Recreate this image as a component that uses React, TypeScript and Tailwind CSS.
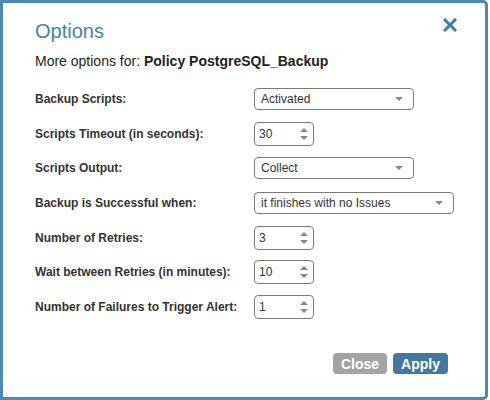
import React from 'react';

type Row =
  | { label: string; kind: 'select'; value: string; width: string }
  | { label: string; kind: 'number'; value: string };

const rows: Row[] = [
  { label: 'Backup Scripts:', kind: 'select', value: 'Activated', width: 'w-[160px]' },
  { label: 'Scripts Timeout (in seconds):', kind: 'number', value: '30' },
  { label: 'Scripts Output:', kind: 'select', value: 'Collect', width: 'w-[160px]' },
  { label: 'Backup is Successful when:', kind: 'select', value: 'it finishes with no Issues', width: 'w-[200px]' },
  { label: 'Number of Retries:', kind: 'number', value: '3' },
  { label: 'Wait between Retries (in minutes):', kind: 'number', value: '10' },
  { label: 'Number of Failures to Trigger Alert:', kind: 'number', value: '1' },
];

function SelectBox({ value, width }: { value: string; width: string }) {
  return (
    <div className={`${width} h-[22px] flex items-center justify-between border border-[#7a7a7a] rounded-[4px] bg-white pl-[6px] pr-[10px] text-[12px] text-[#333]`}>
      <span>{value}</span>
      <span className="w-0 h-0 border-l-[4px] border-r-[4px] border-t-[4px] border-l-transparent border-r-transparent border-t-[#888]" />
    </div>
  );
}

function NumberBox({ value }: { value: string }) {
  return (
    <div className="w-[60px] h-[24px] flex items-center justify-between border border-[#7a7a7a] rounded-[4px] bg-white pl-[4px] pr-[5px] text-[12px] text-[#333]">
      <span>{value}</span>
      <div className="flex flex-col gap-[4px]">
        <span className="w-0 h-0 border-l-[4px] border-r-[4px] border-b-[4px] border-l-transparent border-r-transparent border-b-[#888]" />
        <span className="w-0 h-0 border-l-[4px] border-r-[4px] border-t-[4px] border-l-transparent border-r-transparent border-t-[#888]" />
      </div>
    </div>
  );
}

export default function App() {
  return (
    <div className="w-[490px] h-[400px] bg-white" style={{ fontFamily: '"Liberation Sans", Arial, sans-serif' }}>
      <div className="w-[488px] h-[400px] border-[3px] border-[#4a8ab5] rounded-r-[5px] bg-white pl-[32px] pr-[28px] pt-[16px] flex flex-col">
        {/* header */}
        <div className="flex items-start justify-between h-[24px]">
          <h1 className="mt-[2px] text-[20px] text-[#3d84b3] leading-none">Options</h1>
          <svg width="14" height="14" viewBox="0 0 14 14" className="-mt-[1px]">
            <path d="M2 2 L12 12 M12 2 L2 12" stroke="#3f7ea8" strokeWidth="3" strokeLinecap="square" />
          </svg>
        </div>
        <p className="mt-[11px] text-[14px] text-[#222] leading-none">
          More options for: <span className="font-bold">Policy PostgreSQL_Backup</span>
        </p>

        {/* settings */}
        <div className="mt-[14px] flex flex-col">
          {rows.map((row) => (
            <div key={row.label} className="h-[34.6px] flex items-center">
              <span className="w-[219px] text-[12px] font-bold text-[#333]">{row.label}</span>
              {row.kind === 'select' ? (
                <SelectBox value={row.value} width={row.width} />
              ) : (
                <NumberBox value={row.value} />
              )}
            </div>
          ))}
        </div>

        {/* footer */}
        <div className="mt-auto mb-[23px] flex justify-end gap-[6px] pr-[9px]">
          <button className="h-[21px] px-[8px] rounded-[4px] bg-[#a3a3a3] text-white text-[14px] font-bold leading-none">Close</button>
          <button className="h-[21px] px-[8px] rounded-[4px] bg-[#44789f] text-white text-[14px] font-bold leading-none">Apply</button>
        </div>
      </div>
    </div>
  );
}
